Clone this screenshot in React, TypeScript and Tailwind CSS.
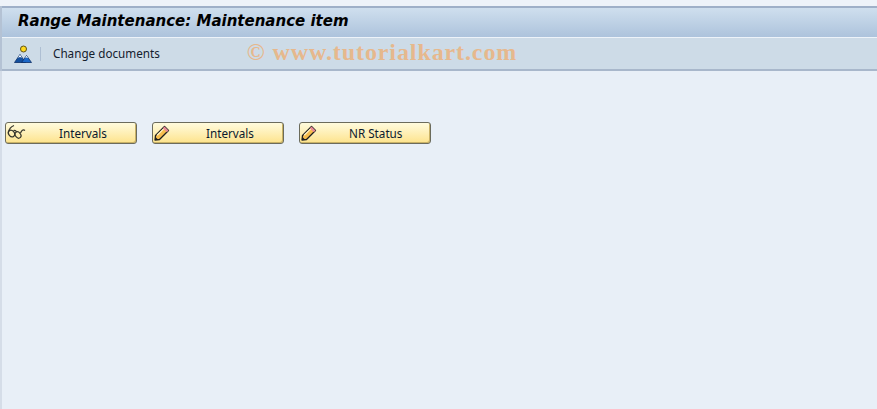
const body = "font-['Noto_Sans','DejaVu_Sans',sans-serif]";

const PictureIcon = () => (
  <svg width="18" height="18" viewBox="0 0 18 18" className="mt-[1px]">
    <circle cx="9.5" cy="4" r="3" fill="#ffd91f" stroke="#5e5218" strokeWidth="1" />
    <path d="M0.5 17.5 L6 9.5 L11.5 17.5 Z" fill="#14509f" stroke="#0d2f66" strokeWidth="0.8" />
    <path d="M7.5 17.5 L12.5 10.5 L17.5 17.5 Z" fill="#1c68c8" stroke="#0d2f66" strokeWidth="0.8" />
    <path d="M4 12.8 L6 9.8 L8 12.8 L6 12 Z M11 12.6 L12.5 10.8 L14.2 13 L12.5 12.4 Z" fill="#fff" />
  </svg>
);

const GlassesIcon = () => (
  <svg width="19" height="16" viewBox="0 0 19 16" fill="none" stroke="#33332a" strokeWidth="1.2" className="mb-[2px]">
    <path d="M1.5 8 C2 5 4.5 2.5 7 1.5" />
    <ellipse cx="4.5" cy="9.5" rx="3.6" ry="2.8" transform="rotate(50 4.5 9.5)" />
    <ellipse cx="11" cy="11" rx="3.4" ry="2.6" transform="rotate(50 11 11)" />
    <path d="M6.5 6.5 C8 6 9 6.5 9.5 8 M13.5 9 C14.5 6.5 16 5 18 6.5" />
  </svg>
);

const PencilIcon = () => (
  <svg width="16" height="16" viewBox="0 0 16 16" className="mb-[1px]">
    <path d="M1 15 L1.5 10.5 L10.5 1.5 L14.5 5.5 L5.5 14.5 Z" fill="#f7bd4d" stroke="#1e1e1e" strokeWidth="1.3" strokeLinejoin="round" />
    <path d="M10.5 1.5 L14.5 5.5 L12.8 7.2 L8.8 3.2 Z" fill="#e98a96" />
    <path d="M1 15 L1.5 12 L4 14.5 Z" fill="#1e1e1e" />
    <path d="M3.2 10.3 L9.6 3.9" stroke="#fff4c8" strokeWidth="1.3" />
  </svg>
);

const SapButton = ({ icon, label, textClass }: { icon: React.ReactNode; label: string; textClass: string }) => (
  <button className="relative flex h-[22px] w-[132px] items-center rounded-[3px] border border-[#6b6b5c] bg-gradient-to-b from-[#fffbdd] to-[#fde38b] pl-[1px] shadow-[inset_-1px_-1px_0_#c9b266]">
    <span className="flex w-5 justify-start">{icon}</span>
    <span className={`mt-[1px] text-[11.7px] text-[#0b1a2e] ${textClass}`}>{label}</span>
  </button>
);

export default function App() {
  return (
    <div className={`flex h-[409px] w-[877px] flex-col overflow-hidden bg-[#e8eff7] ${body}`}>
      <div className="h-[6px] bg-[#eef3f9]" />
      <div className="border-l-2 border-[#b4c2d4]">
        <div className="flex h-[31px] items-center border-t-2 border-[#9fb0c8] bg-gradient-to-b from-[#cfdfee] to-[#adc3dc] pb-[2px] pl-4 font-['DejaVu_Sans',sans-serif] text-[15px] font-bold italic text-black">
          Range Maintenance: Maintenance item
        </div>
        <div className="flex h-[34px] items-center border-t border-b-2 border-t-[#edf3f9] border-b-[#a8b7cb] bg-[#cddbe7] pl-3">
          <PictureIcon />
          <div className="ml-[8px] h-[14px] w-px bg-[#aebfd3]" />
          <span className="ml-[12px] text-[11.7px] text-[#14202e]">Change documents</span>
          <span className="mb-[3px] ml-[87px] font-['Liberation_Serif',serif] text-[24px] font-bold tracking-[0.9px] text-[#e6b88d]">
            © www.tutorialkart.com
          </span>
        </div>
      </div>
      <div className="flex flex-1 gap-[15px] border-l-2 border-[#d5dde8] pl-[3px] pt-[51px]">
        <SapButton icon={<GlassesIcon />} label="Intervals" textClass="ml-[32px]" />
        <SapButton icon={<PencilIcon />} label="Intervals" textClass="ml-[32px]" />
        <SapButton icon={<PencilIcon />} label="NR Status" textClass="ml-[28px]" />
      </div>
    </div>
  );
}
